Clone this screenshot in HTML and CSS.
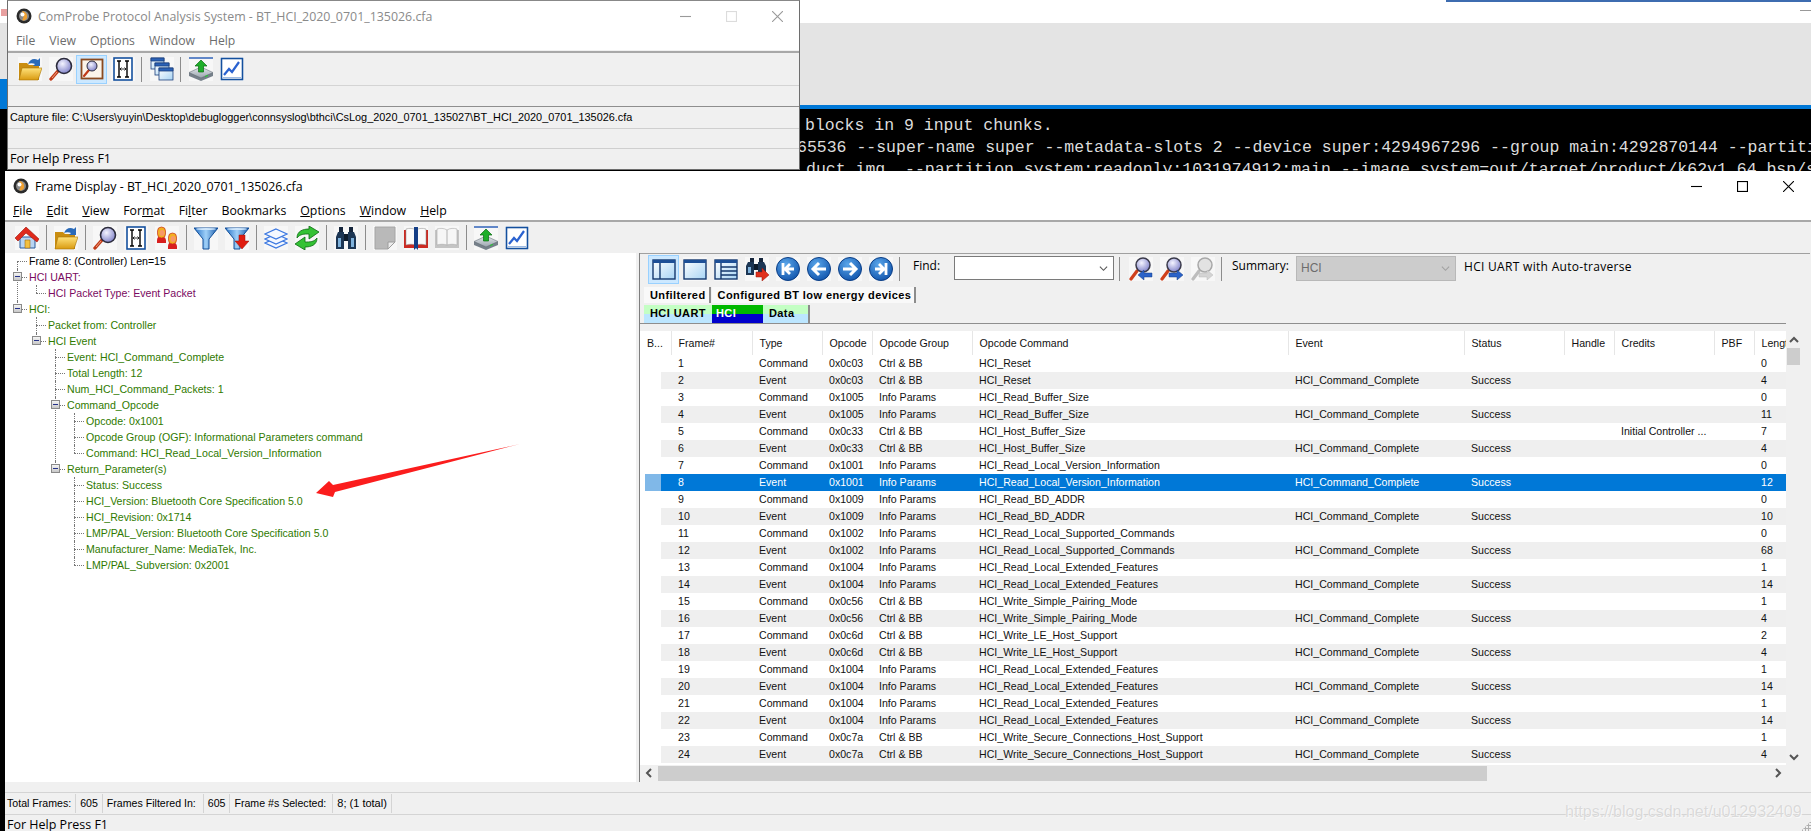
FILE: index.html
```html
<!DOCTYPE html>
<html lang="en">
<head>
<meta charset="utf-8">
<title>ComProbe Protocol Analysis System</title>
<link rel="stylesheet" href="styles.css">
</head>
<body>
<svg class="defs" aria-hidden="true">
  <defs>
    <linearGradient id="gy" x1="0" y1="0" x2="0" y2="1"><stop offset="0" stop-color="#ffe27a"/><stop offset="1" stop-color="#d99a10"/></linearGradient>
    <radialGradient id="lens" cx=".4" cy=".35" r=".7"><stop offset="0" stop-color="#f4f4ff"/><stop offset="1" stop-color="#7d7fc8"/></radialGradient>
    <linearGradient id="fun" x1="0" y1="0" x2="1" y2="0"><stop offset="0" stop-color="#1f6cc4"/><stop offset=".5" stop-color="#9fd0f8"/><stop offset="1" stop-color="#1658a8"/></linearGradient>
    <radialGradient id="nav" cx=".4" cy=".3" r=".8"><stop offset="0" stop-color="#5aa6ea"/><stop offset="1" stop-color="#0c4fa8"/></radialGradient>
    <linearGradient id="pane" x1="0" y1="0" x2="1" y2="1"><stop offset="0" stop-color="#ffffff"/><stop offset="1" stop-color="#a8d4f4"/></linearGradient>
    <linearGradient id="dsk" x1="0" y1="0" x2="0" y2="1"><stop offset="0" stop-color="#e4e8ec"/><stop offset="1" stop-color="#9aa4ae"/></linearGradient>
    <symbol id="i-home" viewBox="0 0 24 24"><path d="M5 11h15v11H5z" fill="#b8d4f2" stroke="#2a5a9a"/><path d="M10 14h5v8h-5z" fill="#f2c040" stroke="#a06a10" stroke-width=".6"/><path d="M0 12 11 1l13 12-2 3-11-9-8 8z" fill="#e02a1c" stroke="#9a1408" stroke-width=".6"/></symbol>
    <symbol id="i-folder" viewBox="0 0 24 24"><path d="M1 6h8l2 2h10v15H1z" fill="#c98d10"/><path d="M1 23l3-12h20l-4 12z" fill="url(#gy)" stroke="#a87408" stroke-width=".6"/><path d="M10 7c2-5 6-6 10-4l2-2v8h-7l2-2c-2-1-5-1-7 0z" fill="#2a6ab8"/></symbol>
    <symbol id="i-mag" viewBox="0 0 24 24"><path d="M9 14 2 22" stroke="#c03a18" stroke-width="3.400" stroke-linecap="round"/><path d="M8 15 3 21" stroke="#f0a080" stroke-width="1"/><circle cx="15" cy="9" r="7.500" fill="url(#lens)" stroke="#2c2c3c" stroke-width="1.600"/></symbol>
    <symbol id="i-hb" viewBox="0 0 24 24"><rect x="3" y="1" width="18" height="22" fill="#fff" stroke="#14509e" stroke-width="1.600"/><path d="M6 4h4M8 4v16M6 20h4M14 4h4M16 4v16M14 20h4" stroke="#000" stroke-width="1.400" fill="none"/><path d="M9 12h6M10.500 10.500 9 12l1.500 1.500M13.500 10.500 15 12l-1.500 1.500" stroke="#000" stroke-width=".8" fill="none"/></symbol>
    <symbol id="i-ppl" viewBox="0 0 24 24"><path d="M2 15c0-3 1-5 4-5s5 2 5 5v2H2z" fill="#d81f1f"/><rect x="2.500" y="1" width="8" height="11" rx="4" fill="#f2b020" stroke="#c8301c" stroke-width=".7"/><ellipse cx="7" cy="7" rx="2.500" ry="3" fill="#f89868"/><path d="M13 21c0-3 1-5 4-5s5 2 5 5v2h-9z" fill="#d81f1f"/><rect x="13.500" y="7" width="8" height="11" rx="4" fill="#f2b020" stroke="#c8301c" stroke-width=".7"/><ellipse cx="18" cy="13" rx="2.500" ry="3" fill="#f89868"/></symbol>
    <symbol id="i-fun" viewBox="0 0 24 24"><path d="M0 2h24l-9 11v10H9V13z" fill="url(#fun)" stroke="#134f98"/><ellipse cx="12" cy="3" rx="10" ry="1" fill="#cfe6fb"/></symbol>
    <symbol id="i-fun2" viewBox="0 0 24 24"><path d="M0 2h24l-9 11v10H9V13z" fill="url(#fun)" stroke="#134f98"/><ellipse cx="12" cy="3" rx="10" ry="1" fill="#cfe6fb"/><path d="M14 9h6v6h4l-7 8-7-8h4z" fill="#e01c10" stroke="#9a1008" stroke-width=".5"/></symbol>
    <symbol id="i-lay" viewBox="0 0 24 24"><g fill="#f4f8ff" stroke="#3c78e0" stroke-width="1.300"><path d="M12 12 23 17 12 22 1 17z"/><path d="M12 8 23 13 12 18 1 13z"/><path d="M12 3 23 8 12 13 1 8z"/></g></symbol>
    <symbol id="i-ref" viewBox="0 0 24 24"><g fill="#34c234" stroke="#0b6a12" stroke-width=".8"><path d="M2 12C2 5 8 3 14 3V0l10 6-10 7V8c-5 0-9 0-12 4z"/><path d="M22 12c0 7-6 9-12 9v3L0 18l10-7v5c5 0 9 0 12-4z"/></g></symbol>
    <symbol id="i-bin" viewBox="0 0 24 24"><path d="M5 1h4v5H5zM15 1h4v5h-4z" fill="#16263c"/><path d="M4 6h6v17H2V11zM20 6h-6v17h8V11z" fill="#1c3654"/><path d="M10 8h4v7h-4z" fill="#0c1a2a"/><path d="M4 12h3v9H4zM17 12h3v9h-3z" fill="#7fb2dc"/></symbol>
    <symbol id="i-bin2" viewBox="0 0 24 24"><path d="M5 1h4v4H5zM14 1h4v4h-4z" fill="#16263c"/><path d="M3 5h6v13H1v-9zM19 5h-6v13h8V9z" fill="#1c3654"/><path d="M9 7h4v6H9z" fill="#0c1a2a"/><path d="M3 10h3v6H3z" fill="#7fb2dc"/><path d="M11 15h6v-4l7 7-7 6v-4h-6z" fill="#e0301c" stroke="#9a1408" stroke-width=".5"/></symbol>
    <symbol id="i-page" viewBox="0 0 24 24"><path d="M2 1h20v15l-7 7H2z" fill="#b9b9b9" stroke="#a4a4a4"/><path d="M22 16h-7v7z" fill="#ececec" stroke="#9c9c9c"/></symbol>
    <symbol id="i-book" viewBox="0 0 24 24"><path d="M0 4h24v18H0z" fill="#cc2a22"/><path d="M2 3c3-1 7-1 10 1 3-2 7-2 10-1v16c-3-1-7-1-10 0-3-1-7-1-10 0z" fill="#fafafa" stroke="#888" stroke-width=".5"/><path d="M10 1h4v23l-2-2-2 2z" fill="#143e86"/></symbol>
    <symbol id="i-bookg" viewBox="0 0 24 24"><path d="M0 4h24v18H0z" fill="#c4c4c4"/><path d="M2 3c3-1 7-1 10 1 3-2 7-2 10-1v16c-3-1-7-1-10 0-3-1-7-1-10 0z" fill="#f6f6f6" stroke="#aaa" stroke-width=".6"/><path d="M12 4v15" stroke="#b0b0b0"/></symbol>
    <symbol id="i-disk" viewBox="0 0 24 24"><path d="M0 1h24" stroke="#2f62b8" stroke-width="1.500"/><path d="M12 11 24 16v3l-12 5L0 19v-3z" fill="#76808a"/><path d="M12 10 24 15.500 12 21 0 15.500z" fill="url(#dsk)" stroke="#5a646c" stroke-width=".5"/><path d="M12 3l6 6h-3.500v6h-5V9H6z" fill="#1fae2a" stroke="#0a6a12" stroke-width=".7"/><path d="M16 19l3-1.300v1.200l-3 1.300z" fill="#2cc23a"/></symbol>
    <symbol id="i-chart" viewBox="0 0 24 24"><rect x="1.500" y="1.500" width="21" height="21" fill="#fff" stroke="#14509e" stroke-width="1.600"/><path d="M4 18l5-6 3 3 7-10" fill="none" stroke="#2a62d0" stroke-width="2.200"/><path d="M3 20.500h18" stroke="#9dbbe4"/></symbol>
    <symbol id="i-fmag" viewBox="0 0 24 24"><rect x="1.500" y="2.500" width="21" height="19" fill="#fbf4ea" stroke="#8a4a20" stroke-width="1.800"/><path d="M9 13 4 19" stroke="#c03a18" stroke-width="2.200" stroke-linecap="round"/><circle cx="12" cy="9" r="5" fill="url(#lens)" stroke="#2c2c3c"/></symbol>
    <symbol id="i-wins" viewBox="0 0 24 24"><g stroke="#1c3f7c" stroke-width=".8"><rect x="1" y="1" width="13" height="11" fill="url(#pane)"/><path d="M1 1h13v3H1z" fill="#2a62b8"/><rect x="5" y="6" width="14" height="12" fill="url(#pane)"/><path d="M5 6h14v3H5z" fill="#2a62b8"/><rect x="9" y="11" width="14" height="12" fill="url(#pane)"/><path d="M9 11h14v3H9z" fill="#2a62b8"/></g></symbol>
    <symbol id="i-p1" viewBox="0 0 24 24"><rect x="1" y="3" width="22" height="19" fill="url(#pane)" stroke="#14386e" stroke-width="1.400"/><path d="M1 3h22v3H1z" fill="#1d4f96"/><path d="M8 6v16" stroke="#14386e" stroke-width="1.400"/></symbol>
    <symbol id="i-p2" viewBox="0 0 24 24"><rect x="1" y="3" width="22" height="19" fill="url(#pane)" stroke="#14386e" stroke-width="1.400"/><path d="M1 3h22v3H1z" fill="#1d4f96"/></symbol>
    <symbol id="i-p3" viewBox="0 0 24 24"><rect x="1" y="3" width="22" height="19" fill="url(#pane)" stroke="#14386e" stroke-width="1.400"/><path d="M1 3h22v3H1z" fill="#1d4f96"/><path d="M7 6v16M7 10h16M7 14h16M7 18h16" stroke="#14386e" stroke-width="1.400"/></symbol>
    <symbol id="i-nf" viewBox="0 0 24 24"><circle cx="12" cy="12" r="11.500" fill="url(#nav)" stroke="#0b3d84"/><path d="M7 6v12M18 12h-8M14 7l-5 5 5 5" fill="none" stroke="#fff" stroke-width="2.800"/></symbol>
    <symbol id="i-np" viewBox="0 0 24 24"><circle cx="12" cy="12" r="11.500" fill="url(#nav)" stroke="#0b3d84"/><path d="M19 12H7M12 6l-6 6 6 6" fill="none" stroke="#fff" stroke-width="3"/></symbol>
    <symbol id="i-nn" viewBox="0 0 24 24"><circle cx="12" cy="12" r="11.500" fill="url(#nav)" stroke="#0b3d84"/><path d="M5 12h12M12 6l6 6-6 6" fill="none" stroke="#fff" stroke-width="3"/></symbol>
    <symbol id="i-nl" viewBox="0 0 24 24"><circle cx="12" cy="12" r="11.500" fill="url(#nav)" stroke="#0b3d84"/><path d="M17 6v12M6 12h8M10 7l5 5-5 5" fill="none" stroke="#fff" stroke-width="2.800"/></symbol>
    <symbol id="i-ml" viewBox="0 0 24 24"><path d="M8 14 2 22" stroke="#d0401c" stroke-width="3.200" stroke-linecap="round"/><circle cx="14" cy="8" r="7" fill="url(#lens)" stroke="#3a3a4a" stroke-width="1.500"/><path d="M23 16h-8v-3l-6 5 6 5v-3h8z" fill="#2a62c8" stroke="#143e86" stroke-width=".5"/></symbol>
    <symbol id="i-mr" viewBox="0 0 24 24"><path d="M8 14 2 22" stroke="#d0401c" stroke-width="3.200" stroke-linecap="round"/><circle cx="14" cy="8" r="7" fill="url(#lens)" stroke="#3a3a4a" stroke-width="1.500"/><path d="M9 16h8v-3l6 5-6 5v-3H9z" fill="#2a62c8" stroke="#143e86" stroke-width=".5"/></symbol>
    <symbol id="i-mg" viewBox="0 0 24 24"><path d="M8 14 2 22" stroke="#bdbdbd" stroke-width="3.200" stroke-linecap="round"/><circle cx="14" cy="8" r="7" fill="#e2e2e2" stroke="#a8a8a8" stroke-width="1.500"/><path d="M8 16h8v-3l6 5-6 5v-3H8z" fill="#d4d4d4" stroke="#bbb" stroke-width=".5"/></symbol>
    <symbol id="i-app" viewBox="0 0 16 16"><circle cx="8" cy="8" r="7.500" fill="#2a2a2a"/><circle cx="8" cy="8" r="5" fill="#8a8a8a"/><path d="M6 3c3 0 6 3 5 7-1 2-3 3-5 2 2-2 2-6 0-9z" fill="#f0a030"/><circle cx="6.500" cy="6.500" r="2" fill="#fff"/></symbol>
    <symbol id="i-chev" viewBox="0 0 10 10"><path d="M1 3l4 4 4-4" fill="none" stroke="currentColor" stroke-width="1.200"/></symbol>
    <symbol id="i-chevb" viewBox="0 0 10 10"><path d="M1 3l4 4 4-4" fill="none" stroke="currentColor" stroke-width="2"/></symbol>
    <symbol id="i-min" viewBox="0 0 10 10"><path d="M0 5h10" stroke="currentColor"/></symbol>
    <symbol id="i-max" viewBox="0 0 10 10"><rect x=".5" y=".5" width="9" height="9" fill="none" stroke="currentColor"/></symbol>
    <symbol id="i-x" viewBox="0 0 10 10"><path d="M0 0l10 10M10 0 0 10" stroke="currentColor"/></symbol>
  </defs>
</svg>

<div class="backdrop"></div>
<div class="corner-line"></div>
<div class="corner-dash"></div>
<div class="corner-mark"></div>
<div class="edge"></div>
<div class="terminal">
  <div class="t1">blocks in 9 input chunks.</div>
  <div class="t2">65536 --super-name super --metadata-slots 2 --device super:4294967296 --group main:4292870144 --partiti</div>
  <div class="t3">duct.img  --partition system:readonly:1031974912:main --image system=out/target/product/k62v1_64_bsp/sy</div>
</div>

<section class="win-main">
  <header class="titlebar inactive">
    <svg class="app"><use href="#i-app"/></svg>
    <span class="title">ComProbe Protocol Analysis System - BT_HCI_2020_0701_135026.cfa</span>
    <span class="winbtns"><svg><use href="#i-min"/></svg><svg class="faint"><use href="#i-max"/></svg><svg><use href="#i-x"/></svg></span>
  </header>
  <nav class="menu menu-main">
    <span>File</span><span>View</span><span>Options</span><span>Window</span><span>Help</span>
  </nav>
  <div class="toolbar tb-main">
    <span class="tb"><svg class="ico"><use href="#i-folder"/></svg></span>
    <span class="tb"><svg class="ico"><use href="#i-mag"/></svg></span>
    <span class="tb sel"><svg class="ico"><use href="#i-fmag"/></svg></span>
    <span class="tb"><svg class="ico"><use href="#i-hb"/></svg></span>
    <span class="sep"></span>
    <span class="tb"><svg class="ico"><use href="#i-wins"/></svg></span>
    <span class="sep"></span>
    <span class="tb"><svg class="ico"><use href="#i-disk"/></svg></span>
    <span class="tb"><svg class="ico"><use href="#i-chart"/></svg></span>
  </div>
  <div class="band"></div>
  <div class="capture">Capture file: C:\Users\yuyin\Desktop\debuglogger\connsyslog\bthci\CsLog_2020_0701_135027\BT_HCI_2020_0701_135026.cfa</div>
  <div class="band2"></div>
  <div class="helpline">For Help Press F1</div>
</section>

<section class="win-frame">
  <header class="titlebar">
    <svg class="app"><use href="#i-app"/></svg>
    <span class="title">Frame Display - BT_HCI_2020_0701_135026.cfa</span>
    <span class="winbtns"><svg><use href="#i-min"/></svg><svg><use href="#i-max"/></svg><svg><use href="#i-x"/></svg></span>
  </header>
  <nav class="menu menu-frame">
    <span><u>F</u>ile</span><span><u>E</u>dit</span><span><u>V</u>iew</span><span>For<u>m</u>at</span><span>Fi<u>l</u>ter</span><span>Bookmarks</span><span><u>O</u>ptions</span><span><u>W</u>indow</span><span><u>H</u>elp</span>
  </nav>
  <div class="toolbar tb-frame">
    <span class="tb"><svg class="ico"><use href="#i-home"/></svg></span>
    <span class="sep"></span>
    <span class="tb"><svg class="ico"><use href="#i-folder"/></svg></span>
    <span class="sep"></span>
    <span class="tb"><svg class="ico"><use href="#i-mag"/></svg></span>
    <span class="tb"><svg class="ico"><use href="#i-hb"/></svg></span>
    <span class="tb"><svg class="ico"><use href="#i-ppl"/></svg></span>
    <span class="sep"></span>
    <span class="tb"><svg class="ico"><use href="#i-fun"/></svg></span>
    <span class="tb"><svg class="ico"><use href="#i-fun2"/></svg></span>
    <span class="sep"></span>
    <span class="tb"><svg class="ico"><use href="#i-lay"/></svg></span>
    <span class="tb"><svg class="ico"><use href="#i-ref"/></svg></span>
    <span class="sep"></span>
    <span class="tb"><svg class="ico"><use href="#i-bin"/></svg></span>
    <span class="sep"></span>
    <span class="tb"><svg class="ico"><use href="#i-page"/></svg></span>
    <span class="tb"><svg class="ico"><use href="#i-book"/></svg></span>
    <span class="tb"><svg class="ico"><use href="#i-bookg"/></svg></span>
    <span class="sep"></span>
    <span class="tb"><svg class="ico"><use href="#i-disk"/></svg></span>
    <span class="tb"><svg class="ico"><use href="#i-chart"/></svg></span>
  </div>

  <div class="split">
    <div class="tree-pane">
      <ul class="tree root">
        <li class="black"><span>Frame 8: (Controller) Len=15</span></li>
        <li class="purple exp"><i class="box"></i><span>HCI UART:</span>
          <ul class="tree"><li><span>HCI Packet Type: Event Packet</span></li></ul>
        </li>
        <li class="green exp"><i class="box"></i><span>HCI:</span>
          <ul class="tree">
            <li><span>Packet from: Controller</span></li>
            <li class="exp"><i class="box"></i><span>HCI Event</span>
              <ul class="tree">
                <li><span>Event: HCI_Command_Complete</span></li>
                <li><span>Total Length: 12</span></li>
                <li><span>Num_HCI_Command_Packets: 1</span></li>
                <li class="exp"><i class="box"></i><span>Command_Opcode</span>
                  <ul class="tree">
                    <li><span>Opcode: 0x1001</span></li>
                    <li><span>Opcode Group (OGF): Informational Parameters command</span></li>
                    <li><span>Command: HCI_Read_Local_Version_Information</span></li>
                  </ul>
                </li>
                <li class="exp"><i class="box"></i><span>Return_Parameter(s)</span>
                  <ul class="tree">
                    <li><span>Status: Success</span></li>
                    <li><span>HCI_Version: Bluetooth Core Specification 5.0</span></li>
                    <li><span>HCI_Revision: 0x1714</span></li>
                    <li><span>LMP/PAL_Version: Bluetooth Core Specification 5.0</span></li>
                    <li><span>Manufacturer_Name: MediaTek, Inc.</span></li>
                    <li><span>LMP/PAL_Subversion: 0x2001</span></li>
                  </ul>
                </li>
              </ul>
            </li>
          </ul>
        </li>
      </ul>
      <svg class="arrow" viewBox="0 0 214 60"><path d="M209 0 22 41 18 37 5 49 22 53 24 48z" fill="#fb1d1d"/></svg>
    </div>

    <div class="data-pane">
      <div class="toolbar tb-pane">
        <span class="tb sel"><svg class="ico"><use href="#i-p1"/></svg></span>
        <span class="tb"><svg class="ico"><use href="#i-p2"/></svg></span>
        <span class="tb"><svg class="ico"><use href="#i-p3"/></svg></span>
        <span class="tb"><svg class="ico"><use href="#i-bin2"/></svg></span>
        <span class="tb"><svg class="ico"><use href="#i-nf"/></svg></span>
        <span class="tb"><svg class="ico"><use href="#i-np"/></svg></span>
        <span class="tb"><svg class="ico"><use href="#i-nn"/></svg></span>
        <span class="tb"><svg class="ico"><use href="#i-nl"/></svg></span>
        <span class="sep"></span>
        <label class="find-label">Find:</label>
        <span class="combo find"><svg><use href="#i-chev"/></svg></span>
        <span class="sep"></span>
        <span class="tb"><svg class="ico"><use href="#i-ml"/></svg></span>
        <span class="tb"><svg class="ico"><use href="#i-mr"/></svg></span>
        <span class="tb"><svg class="ico"><use href="#i-mg"/></svg></span>
        <span class="sep"></span>
        <label class="sum-label">Summary:</label>
        <span class="combo summary"><b>HCI</b><svg><use href="#i-chev"/></svg></span>
        <span class="traverse">HCI UART with Auto-traverse</span>
      </div>
      <div class="tabs tabs-a">
        <span class="tab">Unfiltered</span>
        <span class="tab">Configured BT low energy devices</span>
      </div>
      <div class="tabs tabs-b">
        <span class="ptab ptab-1">HCI UART</span>
        <span class="ptab ptab-on">HCI</span>
        <span class="ptab ptab-3">Data</span>
      </div>
      <div class="rule"></div>
      <div class="list-row">
        <div class="list">
          <table>
            <colgroup><col class="c0"><col class="c1"><col class="c2"><col class="c3"><col class="c4"><col class="c5"><col class="c6"><col class="c7"><col class="c8"><col class="c9"><col class="c10"><col class="c11"></colgroup>
            <thead><tr><th>B...</th><th>Frame#</th><th>Type</th><th>Opcode</th><th>Opcode Group</th><th>Opcode Command</th><th>Event</th><th>Status</th><th>Handle</th><th>Credits</th><th>PBF</th><th>Length</th></tr></thead>
            <tbody>
              <tr><td></td><td>1</td><td>Command</td><td>0x0c03</td><td>Ctrl &amp; BB</td><td>HCI_Reset</td><td></td><td></td><td></td><td></td><td></td><td>0</td></tr>
              <tr><td></td><td>2</td><td>Event</td><td>0x0c03</td><td>Ctrl &amp; BB</td><td>HCI_Reset</td><td>HCI_Command_Complete</td><td>Success</td><td></td><td></td><td></td><td>4</td></tr>
              <tr><td></td><td>3</td><td>Command</td><td>0x1005</td><td>Info Params</td><td>HCI_Read_Buffer_Size</td><td></td><td></td><td></td><td></td><td></td><td>0</td></tr>
              <tr><td></td><td>4</td><td>Event</td><td>0x1005</td><td>Info Params</td><td>HCI_Read_Buffer_Size</td><td>HCI_Command_Complete</td><td>Success</td><td></td><td></td><td></td><td>11</td></tr>
              <tr><td></td><td>5</td><td>Command</td><td>0x0c33</td><td>Ctrl &amp; BB</td><td>HCI_Host_Buffer_Size</td><td></td><td></td><td></td><td>Initial Controller ...</td><td></td><td>7</td></tr>
              <tr><td></td><td>6</td><td>Event</td><td>0x0c33</td><td>Ctrl &amp; BB</td><td>HCI_Host_Buffer_Size</td><td>HCI_Command_Complete</td><td>Success</td><td></td><td></td><td></td><td>4</td></tr>
              <tr><td></td><td>7</td><td>Command</td><td>0x1001</td><td>Info Params</td><td>HCI_Read_Local_Version_Information</td><td></td><td></td><td></td><td></td><td></td><td>0</td></tr>
              <tr class="picked"><td></td><td>8</td><td>Event</td><td>0x1001</td><td>Info Params</td><td>HCI_Read_Local_Version_Information</td><td>HCI_Command_Complete</td><td>Success</td><td></td><td></td><td></td><td>12</td></tr>
              <tr><td></td><td>9</td><td>Command</td><td>0x1009</td><td>Info Params</td><td>HCI_Read_BD_ADDR</td><td></td><td></td><td></td><td></td><td></td><td>0</td></tr>
              <tr><td></td><td>10</td><td>Event</td><td>0x1009</td><td>Info Params</td><td>HCI_Read_BD_ADDR</td><td>HCI_Command_Complete</td><td>Success</td><td></td><td></td><td></td><td>10</td></tr>
              <tr><td></td><td>11</td><td>Command</td><td>0x1002</td><td>Info Params</td><td>HCI_Read_Local_Supported_Commands</td><td></td><td></td><td></td><td></td><td></td><td>0</td></tr>
              <tr><td></td><td>12</td><td>Event</td><td>0x1002</td><td>Info Params</td><td>HCI_Read_Local_Supported_Commands</td><td>HCI_Command_Complete</td><td>Success</td><td></td><td></td><td></td><td>68</td></tr>
              <tr><td></td><td>13</td><td>Command</td><td>0x1004</td><td>Info Params</td><td>HCI_Read_Local_Extended_Features</td><td></td><td></td><td></td><td></td><td></td><td>1</td></tr>
              <tr><td></td><td>14</td><td>Event</td><td>0x1004</td><td>Info Params</td><td>HCI_Read_Local_Extended_Features</td><td>HCI_Command_Complete</td><td>Success</td><td></td><td></td><td></td><td>14</td></tr>
              <tr><td></td><td>15</td><td>Command</td><td>0x0c56</td><td>Ctrl &amp; BB</td><td>HCI_Write_Simple_Pairing_Mode</td><td></td><td></td><td></td><td></td><td></td><td>1</td></tr>
              <tr><td></td><td>16</td><td>Event</td><td>0x0c56</td><td>Ctrl &amp; BB</td><td>HCI_Write_Simple_Pairing_Mode</td><td>HCI_Command_Complete</td><td>Success</td><td></td><td></td><td></td><td>4</td></tr>
              <tr><td></td><td>17</td><td>Command</td><td>0x0c6d</td><td>Ctrl &amp; BB</td><td>HCI_Write_LE_Host_Support</td><td></td><td></td><td></td><td></td><td></td><td>2</td></tr>
              <tr><td></td><td>18</td><td>Event</td><td>0x0c6d</td><td>Ctrl &amp; BB</td><td>HCI_Write_LE_Host_Support</td><td>HCI_Command_Complete</td><td>Success</td><td></td><td></td><td></td><td>4</td></tr>
              <tr><td></td><td>19</td><td>Command</td><td>0x1004</td><td>Info Params</td><td>HCI_Read_Local_Extended_Features</td><td></td><td></td><td></td><td></td><td></td><td>1</td></tr>
              <tr><td></td><td>20</td><td>Event</td><td>0x1004</td><td>Info Params</td><td>HCI_Read_Local_Extended_Features</td><td>HCI_Command_Complete</td><td>Success</td><td></td><td></td><td></td><td>14</td></tr>
              <tr><td></td><td>21</td><td>Command</td><td>0x1004</td><td>Info Params</td><td>HCI_Read_Local_Extended_Features</td><td></td><td></td><td></td><td></td><td></td><td>1</td></tr>
              <tr><td></td><td>22</td><td>Event</td><td>0x1004</td><td>Info Params</td><td>HCI_Read_Local_Extended_Features</td><td>HCI_Command_Complete</td><td>Success</td><td></td><td></td><td></td><td>14</td></tr>
              <tr><td></td><td>23</td><td>Command</td><td>0x0c7a</td><td>Ctrl &amp; BB</td><td>HCI_Write_Secure_Connections_Host_Support</td><td></td><td></td><td></td><td></td><td></td><td>1</td></tr>
              <tr><td></td><td>24</td><td>Event</td><td>0x0c7a</td><td>Ctrl &amp; BB</td><td>HCI_Write_Secure_Connections_Host_Support</td><td>HCI_Command_Complete</td><td>Success</td><td></td><td></td><td></td><td>4</td></tr>
            </tbody>
          </table>
        </div>
        <div class="vscroll">
          <svg class="up"><use href="#i-chevb"/></svg>
          <span class="vthumb"></span>
          <svg class="down"><use href="#i-chevb"/></svg>
        </div>
      </div>
      <div class="hscroll">
        <svg class="left"><use href="#i-chevb"/></svg>
        <span class="hthumb"></span>
        <svg class="right"><use href="#i-chevb"/></svg>
      </div>
    </div>
  </div>

  <div class="status">
    <span>Total Frames:</span><span>605</span><span>Frames Filtered In:</span><span>605</span><span>Frame #s Selected:</span><span>8; (1 total)</span>
  </div>
  <div class="helpline frame-help">For Help Press F1</div>
</section>

<div class="watermark">https://blog.csdn.net/u012932409</div>
<div class="grip"></div>
</body>
</html>
```

FILE: styles.css
```css
* { box-sizing: border-box; }
html, body { margin: 0; padding: 0; }
body {
  position: relative;
  width: 1811px;
  height: 831px;
  overflow: hidden;
  background: #fff;
  font: 10.6px/16px "Liberation Sans", Arial, sans-serif;
  color: #000;
}
.defs { position: absolute; width: 0; height: 0; }

/* desktop behind the windows */
.backdrop { position: absolute; left: 0; right: 0; top: 23px; height: 82px; background: #e4e4e4; }
.corner-line { position: absolute; left: 1446px; right: 0; top: 0; height: 2px; background: #3d6cb0; }
.corner-dash { position: absolute; left: 1800px; right: 0; top: 10px; height: 1px; background: #999; }
.corner-mark { position: absolute; left: 1px; top: 9px; width: 6px; height: 7px; background: #e8a0a0; }
.edge { position: absolute; left: 0; top: 79px; width: 7px; bottom: 0; background: linear-gradient(#0078d7 0, #0078d7 64px, #000 64px); }
.terminal {
  position: absolute; left: 0; right: 0; top: 105px; height: 66px;
  border-top: 4px solid #0078d7;
  background: #000; color: #dcdcdc;
  padding-top: 6px;
  font: 16.5px/22px "Liberation Mono", monospace;
  overflow: hidden;
}
.terminal div { white-space: pre; }
.t1 { margin-left: 805px; }
.t2 { margin-left: 797px; }
.t3 { margin-left: 806px; }

/* windows */
.win-main {
  position: absolute; left: 7px; top: 0; width: 793px; height: 170px;
  display: flex; flex-direction: column;
  border: 1px solid #6e6e6e; border-top-color: #888;
  background: #f0f0f0;
}
.win-frame {
  position: absolute; left: 5px; top: 171px; right: 0; bottom: 0;
  display: flex; flex-direction: column;
  background: #f0f0f0;
}
.titlebar {
  flex: none; height: 30px; background: #fff;
  display: flex; align-items: center;
  font: 12.35px "Open Sans", sans-serif;
  padding-left: 8px;
}
.titlebar .app { width: 16px; height: 16px; margin-right: 6px; flex: none; }
.titlebar .title { flex: 1; white-space: nowrap; }
.titlebar.inactive { color: #8a8a8a; font-size: 12.4px; }
.winbtns { display: flex; gap: 35px; color: #000; flex: none; align-items: center; }
.winbtns svg { width: 11px; height: 11px; display: block; }
.inactive .winbtns { color: #9a9a9a; padding-right: 16px; }
.inactive .winbtns .faint { color: #dcdcdc; }
.win-frame .winbtns { padding-right: 17px; }
.menu {
  flex: none; height: 20px; background: #fff;
  display: flex; gap: 14px; align-items: center;
  font: 12.3px "Open Sans", sans-serif;
  white-space: nowrap;
}
.menu-main { color: #6d6d6d; padding-left: 8px; height: 19px; font-size: 12.2px; }
.menu-frame { padding-left: 8px; height: 19px; }

.toolbar {
  flex: none; display: flex; align-items: center;
  background: #f0f0f0;
}
.tb { flex: none; width: 31px; height: 29px; display: flex; align-items: center; justify-content: center; }
.tb.sel { background: #cce8ff; box-shadow: inset 0 0 0 1px #99d1ff; }
.ico { width: 24px; height: 24px; display: block; background: #f7f7f7; }
.tb.sel .ico { background: transparent; }
.sep { flex: none; width: 8px; height: 25px; position: relative; }
.sep::after { content: ""; position: absolute; left: 3px; top: 0; bottom: 0; width: 1px; background: #8c8c8c; }

.tb-main {
  height: 35px; margin-top: 1px; padding-left: 6px;
  border-top: 2px solid #a8a8a8; border-bottom: 1px solid #d4d4d4;
}
.band { flex: none; height: 21px; border-bottom: 1px solid #8e8e8e; }
.capture { flex: none; height: 22px; line-height: 21px; padding-left: 2px; border-bottom: 1px solid #cfcfcf; white-space: nowrap; font-size: 10.9px; }
.band2 { flex: none; height: 20px; border-bottom: 1px solid #cfcfcf; }
.helpline { flex: none; font: 12.5px/19px "Open Sans", sans-serif; padding-left: 2px; white-space: nowrap; }

.tb-frame {
  height: 33px; padding-left: 6.5px;
  border-top: 2px solid #a8a8a8;
}

.split { flex: none; height: 529px; display: flex; }
.tree-pane { flex: none; width: 631px; background: #fff; position: relative; overflow: hidden; }
.root { margin: 0 0 0 12px; }
.tree { list-style: none; padding: 0; }
.tree .tree { margin: 0 0 0 7px; }
.tree li { position: relative; padding-left: 12px; white-space: nowrap; }
.tree li > span { display: block; height: 16px; }
.tree li::before { content: ""; position: absolute; left: 0; top: 0; bottom: 0; border-left: 1px dotted #777; }
.tree li:last-child::before { bottom: auto; height: 8px; }
.root > li:first-child::before { top: 8px; }
.tree li::after { content: ""; position: absolute; left: 0; top: 8px; width: 10px; border-top: 1px dotted #777; }
.box {
  position: absolute; z-index: 1; left: -4px; top: 3px; width: 9px; height: 9px;
  background: linear-gradient(#f4f4f4, #c8c8c8);
  border: 1px solid #8a8a8a;
}
.box::after { content: ""; position: absolute; left: 1px; right: 1px; top: 3px; height: 1px; background: #26328a; }
.black { color: #000; }
.purple { color: #7a0a60; }
.green { color: #2f7a00; }
.arrow { position: absolute; left: 306px; top: 191px; width: 214px; height: 60px; }

.data-pane {
  flex: none; width: 1171px; margin-left: 3px;
  display: flex; flex-direction: column;
  background: #f0f0f0;
  border-left: 1px solid #7e7e7e;
}
.tb-pane { height: 30px; padding: 1px 0 0 8px; border-top: 1px solid #a0a0a0; }
.tb-pane .sep { height: 24px; }
.find-label { flex: none; width: 50px; height: 26px; padding-left: 9px; font: 12px/20px "Open Sans", sans-serif; }
.sum-label { flex: none; width: 70px; height: 26px; padding-left: 6px; font: 12px/20px "Open Sans", sans-serif; }
.combo {
  flex: none; width: 160px; height: 24px; position: relative; top: -1px;
  display: flex; align-items: center; padding-left: 4px;
  border: 1px solid #7a7a7a; background: #fff; color: #555;
}
.combo svg { position: absolute; right: 5px; top: 7px; width: 9px; height: 9px; }
.find { margin-right: 2px; }
.find + .sep { margin-right: 1px; }
.summary { height: 25px; background: #ccc; border-color: #b8b8b8; color: #a0a0a0; }
.summary b { font: 12px "Liberation Sans", sans-serif; color: #6d6d6d; }
.traverse { margin-left: 8px; height: 26px; font: 12px/22px "Open Sans", sans-serif; letter-spacing: .3px; white-space: nowrap; }

.tabs { flex: none; display: flex; font: bold 11px/16px "Liberation Sans", sans-serif; letter-spacing: .42px; white-space: nowrap; padding-left: 4px; }
.tabs-a { margin-top: 4px; height: 16px; gap: 1px; }
.tab { background: #f9f9f9; padding: 0 3px 0 6px; border-right: 2px solid #8c8c8c; }
.tabs-b { margin-top: 2px; height: 18px; }
.ptab { padding: 0 8px 0 6px; line-height: 16px; background: linear-gradient(#c4ffc4 0, #c4ffc4 50%, #bce6ff 50%); }
.ptab-1 { padding-right: 6px; }
.ptab-on { width: 51px; padding-left: 4px; color: #fff; background: linear-gradient(#00b800 0, #00b800 50%, #0000cc 50%); }
.ptab-3 { width: 47px; border-right: 2px solid #8c8c8c; padding-left: 6px; }
.rule { flex: none; height: 8px; width: 1146px; border-top: 1px solid #8e8e8e; }

.list-row { flex: none; height: 434px; display: flex; }
.list { flex: none; width: 1146px; background: #fff; overflow: hidden; }
table { border-collapse: collapse; table-layout: fixed; width: 1146px; }
.c0 { width: 31px; } .c1 { width: 81px; } .c2 { width: 70px; } .c3 { width: 50px; }
.c4 { width: 100px; } .c5 { width: 316px; } .c6 { width: 176px; } .c7 { width: 100px; }
.c8 { width: 50px; } .c9 { width: 100px; } .c10 { width: 40px; } .c11 { width: 32px; }
th, td { padding: 0 0 0 7px; text-align: left; font-weight: normal; white-space: nowrap; overflow: hidden; color: #111; }
th { height: 24px; border-right: 1px solid #e6e6e6; }
th:last-child { border-right: 0; }
td { height: 17px; line-height: 17px; }
tbody tr:nth-child(even) td { background: #efefef; }
tbody tr:nth-child(even) td:first-child { background: linear-gradient(to right, #fff 21px, #efefef 21px); }
tbody tr.picked td { background: #0078d7; color: #fff; }
tbody tr.picked td:first-child { background: linear-gradient(to right, #fff 5px, #80b8e8 5px, #80b8e8 21px, #0078d7 21px); }

.vscroll { flex: none; width: 25px; position: relative; color: #555; }
.vscroll svg { position: absolute; left: 3px; width: 10px; height: 10px; }
.vscroll .up { top: 4px; transform: rotate(180deg); }
.vscroll .down { top: 421px; }
.vthumb { position: absolute; left: 1px; top: 17px; width: 13px; height: 17px; background: #cdcdcd; }
.hscroll { flex: none; height: 17px; position: relative; color: #555; }
.hscroll svg { position: absolute; top: 3px; width: 10px; height: 10px; }
.hscroll .left { left: 4px; transform: rotate(90deg); }
.hscroll .right { left: 1133px; transform: rotate(-90deg); }
.hthumb { position: absolute; left: 18px; top: 1px; width: 829px; height: 15px; background: #cdcdcd; }

.status {
  flex: none; height: 23px; margin-top: 10px; padding: 1px 0 1px 2px;
  display: flex; align-items: stretch;
  border-top: 1px solid #d4d4d4; border-bottom: 1px solid #d4d4d4;
  line-height: 19px; white-space: nowrap;
}
.status span { padding: 0 4px 0 0; margin-right: 4px; border-right: 1px solid #d4d4d4; }
.status span:nth-child(3) { padding-right: 7px; }
.status span:nth-child(5) { padding-right: 6px; }
.status span:nth-child(6) { font-size: 11px; }
.frame-help { height: 17px; line-height: 20px; }

.watermark {
  position: absolute; left: 1565px; top: 802px;
  font: 16px/20px "Liberation Sans", sans-serif;
  color: #d9d9d9; text-shadow: 0 0 1px #fff, 1px 1px 0 #f8f8f8;
  white-space: nowrap;
}
.grip {
  position: absolute; right: 0; bottom: 0; width: 10px; height: 10px;
  background: radial-gradient(circle, #b0b0b0 1px, transparent 1.2px) 0 0 / 3px 3px;
  clip-path: polygon(100% 0, 100% 100%, 0 100%);
}
```
